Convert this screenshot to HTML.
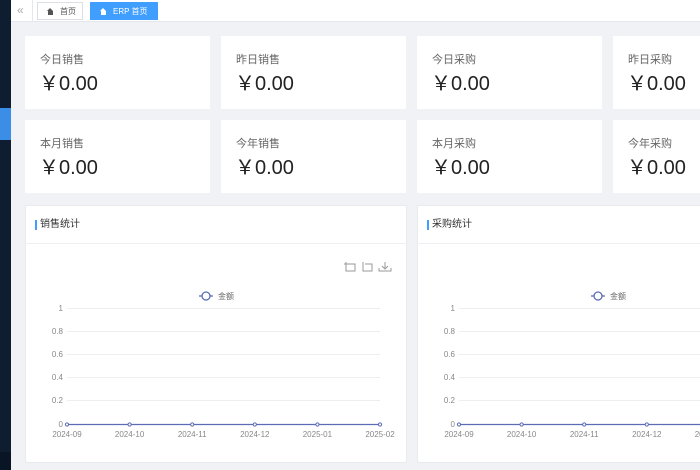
<!DOCTYPE html>
<html><head><meta charset="utf-8"><style>
*{margin:0;padding:0;box-sizing:border-box}
body{width:700px;height:470px;overflow:hidden;background:#f0f2f5;font-family:"Liberation Sans","Noto Sans CJK SC",sans-serif;position:relative}
.side{position:absolute;left:0;top:0;width:11px;height:470px;background:#0e1e30}
.side .act{position:absolute;top:108px;left:0;width:11px;height:32px;background:#3a8ee6}
.side .bot{position:absolute;top:452px;left:0;width:11px;height:18px;background:#091524}
.top{position:absolute;left:11px;top:0;width:689px;height:22px;background:#fff;border-bottom:1px solid #e4e7ed}
.tab{position:absolute;top:2px;height:18px;font-size:8px;line-height:17px;padding-left:22px;border:1px solid #dcdfe6;color:#555;background:#fff}
.tab.on{background:#409eff;border-color:#409eff;color:#fff}
.tab:before{content:"";position:absolute;left:9px;top:5px;width:0;height:0;border:3.5px solid transparent;border-bottom:3px solid currentColor;border-top:0}
.tab:after{content:"";position:absolute;left:10px;top:8px;width:5px;height:4px;background:currentColor}
.card{position:absolute;background:#fff;width:185px;height:73px}
.card .t{position:absolute;left:15px;top:15px;font-size:11px;color:#666}
.card .v{position:absolute;left:14px;top:31px;font-size:20px;color:#222}
.panel{position:absolute;top:205px;height:258px;background:#fff;border:1px solid #e8eaee;border-radius:2px}
.panel .h{height:38px;border-bottom:1px solid #eef0f3;font-size:10px;color:#333;line-height:38px;padding-left:14px;position:relative}
.panel .h:before{content:"";position:absolute;left:9px;top:14px;width:2px;height:10px;background:#409eff}
</style></head><body>
<div class="side"><div class="act"></div><div class="bot"></div></div>
<div class="top">
<div style="position:absolute;left:6px;top:3px;font-size:12px;color:#aaa">«</div>
<div style="position:absolute;left:21px;top:0;width:1px;height:22px;background:#e4e7ed"></div>
<div class="tab" style="left:26px;width:46px">首页</div>
<div class="tab on" style="left:79px;width:68px">ERP 首页</div>
</div>
<div class="card" style="left:25px;top:36px"><div class="t">今日销售</div><div class="v">￥0.00</div></div>
<div class="card" style="left:221px;top:36px"><div class="t">昨日销售</div><div class="v">￥0.00</div></div>
<div class="card" style="left:417px;top:36px"><div class="t">今日采购</div><div class="v">￥0.00</div></div>
<div class="card" style="left:613px;top:36px"><div class="t">昨日采购</div><div class="v">￥0.00</div></div>
<div class="card" style="left:25px;top:120px"><div class="t">本月销售</div><div class="v">￥0.00</div></div>
<div class="card" style="left:221px;top:120px"><div class="t">今年销售</div><div class="v">￥0.00</div></div>
<div class="card" style="left:417px;top:120px"><div class="t">本月采购</div><div class="v">￥0.00</div></div>
<div class="card" style="left:613px;top:120px"><div class="t">今年采购</div><div class="v">￥0.00</div></div>
<div class="panel" style="left:25px;width:382px"><div class="h">销售统计</div></div>
<div class="panel" style="left:417px;width:290px"><div class="h">采购统计</div></div>
<svg width="700" height="470" style="position:absolute;left:0;top:0" font-family="Liberation Sans" font-size="8" fill="#888">
<g fill="none" stroke="#999" stroke-width="1">
<path d="M346 262v9h9v-7h-7M344 264h4"/><path d="M363 262v9h9v-7h-7"/><path d="M385 262v6M382 266l3 3 3-3M379 268v3h12v-3"/>
</g>
<g id="c">
<g stroke="#eeeeee" stroke-width="1"><path d="M67 308.5H380M67 331.5H380M67 354.5H380M67 377.5H380M67 400.5H380"/></g>
<g text-anchor="end"><text x="63" y="311">1</text><text x="63" y="334">0.8</text><text x="63" y="357">0.6</text><text x="63" y="380">0.4</text><text x="63" y="403">0.2</text><text x="63" y="427">0</text></g>
<path d="M67 424.5H380" stroke="#5b6bb5" stroke-width="1.3"/>
<g fill="#fff" stroke="#5b6bb5" stroke-width="1"><circle cx="67" cy="424.5" r="1.6"/><circle cx="129.6" cy="424.5" r="1.6"/><circle cx="192.2" cy="424.5" r="1.6"/><circle cx="254.8" cy="424.5" r="1.6"/><circle cx="317.4" cy="424.5" r="1.6"/><circle cx="380" cy="424.5" r="1.6"/></g>
<g text-anchor="middle"><text x="67" y="437">2024-09</text><text x="129.6" y="437">2024-10</text><text x="192.2" y="437">2024-11</text><text x="254.8" y="437">2024-12</text><text x="317.4" y="437">2025-01</text><text x="380" y="437">2025-02</text></g>
<path d="M199 296h14" stroke="#5b6bb5" stroke-width="1.3"/><circle cx="206" cy="296" r="4" fill="#fff" stroke="#5b6bb5" stroke-width="1.3"/>
<text x="218" y="299" fill="#666">金额</text>
</g>
<use href="#c" x="392"/>
</svg>
</body></html>
